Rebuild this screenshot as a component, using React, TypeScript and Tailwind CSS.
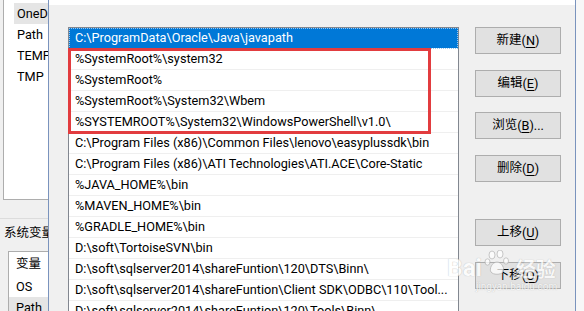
import React from "react";

const paths = [
  "C:\\ProgramData\\Oracle\\Java\\javapath",
  "%SystemRoot%\\system32",
  "%SystemRoot%",
  "%SystemRoot%\\System32\\Wbem",
  "%SYSTEMROOT%\\System32\\WindowsPowerShell\\v1.0\\",
  "C:\\Program Files (x86)\\Common Files\\lenovo\\easyplussdk\\bin",
  "C:\\Program Files (x86)\\ATI Technologies\\ATI.ACE\\Core-Static",
  "%JAVA_HOME%\\bin",
  "%MAVEN_HOME%\\bin",
  "%GRADLE_HOME%\\bin",
  "D:\\soft\\TortoiseSVN\\bin",
  "D:\\soft\\sqlserver2014\\shareFuntion\\120\\DTS\\Binn\\",
  "D:\\soft\\sqlserver2014\\shareFuntion\\Client SDK\\ODBC\\110\\Tool...",
  "D:\\soft\\sqlserver2014\\shareFuntion\\120\\Tools\\Binn\\",
];

const buttons = [
  { label: "新建", key: "N", after: "", mt: "mt-0" },
  { label: "编辑", key: "E", after: "", mt: "mt-[16px]" },
  { label: "浏览", key: "B", after: "...", mt: "mt-[15px]" },
  { label: "删除", key: "D", after: "", mt: "mt-[16px]" },
  { label: "上移", key: "U", after: "", mt: "mt-[37px]" },
  { label: "下移", key: "O", after: "", mt: "mt-[16px]" },
];

function WinButton({ label, k, after, mt }: { label: string; k: string; after: string; mt: string }) {
  return (
    <div
      className={`${mt} flex h-[27px] w-[86px] shrink-0 items-center justify-center border border-[#adadad] bg-[#e1e1e1] text-black`}
    >
      <span className="text-[12.5px]">{label}</span>(<span className="underline underline-offset-2">{k}</span>){after}
    </div>
  );
}

function BackWindow() {
  return (
    <div className="flex w-[48px] shrink-0 flex-col overflow-hidden">
      <div className="ml-[3px] flex h-[200px] shrink-0 flex-col border-l border-b border-[#adadad] bg-white pt-[3px]">
        <div className="ml-[10px] flex h-[21px] shrink-0 items-center bg-[#e5e5e5] pl-[3px]">
          <span className="whitespace-nowrap">OneD</span>
        </div>
        {["Path", "TEMP", "TMP"].map((v) => (
          <div key={v} className="flex h-[21px] shrink-0 items-center whitespace-nowrap pl-[13px]">
            {v}
          </div>
        ))}
      </div>
      <div className="mt-[18px] h-px shrink-0 bg-[#dcdcdc]" />
      <div className="mt-[2px] flex h-[24px] shrink-0 items-center whitespace-nowrap pl-[4px] text-[12.5px]">
        系统变量
      </div>
      <div className="ml-[8px] mt-[6px] flex min-h-0 flex-1 flex-col border-l border-t border-[#adadad] bg-white">
        <div className="flex h-[24px] shrink-0 items-center whitespace-nowrap pl-[7px] text-[12.5px]">变量</div>
        <div className="flex h-[21px] shrink-0 items-center whitespace-nowrap pl-[7px]">OS</div>
        <div className="flex h-[21px] shrink-0 items-center whitespace-nowrap bg-[#e5e5e5] pl-[7px]">Path</div>
      </div>
    </div>
  );
}

// baidu jingyan watermark over the lower buttons
function Watermark() {
  return (
    <div className="pointer-events-none absolute left-[446px] top-[250px] flex flex-col items-center opacity-75">
      <div className="flex items-end gap-[2px]">
        <span className="text-[24px] font-bold leading-none text-white [text-shadow:0_0_1px_#9a9a9a]">Bai</span>
        <svg width="30" height="26" viewBox="0 0 30 26" className="mb-[4px]">
          <g fill="#ffffff" stroke="#a8a8a8" strokeWidth="0.8">
            <ellipse cx="8" cy="5" rx="3" ry="4" />
            <ellipse cx="16" cy="4" rx="3" ry="4" />
            <ellipse cx="3.5" cy="12" rx="2.5" ry="3.2" />
            <ellipse cx="22" cy="11" rx="2.5" ry="3.2" />
            <path d="M13 12 C8 12 5 19 7 22 C9 25 17 25 19 22 C21 19 18 12 13 12 Z" />
          </g>
        </svg>
        <span className="text-[20px] font-bold leading-none text-white [text-shadow:0_0_1px_#9a9a9a]">经验</span>
      </div>
      <span className="ml-[30px] mt-[2px] text-[10px] leading-none text-white [text-shadow:0_0_1px_#9a9a9a]">
        jingyan.baidu.com
      </span>
    </div>
  );
}

export default function App() {
  return (
    <div className="relative h-[311px] w-[584px] overflow-hidden bg-[#f0f0f0] font-['Roboto','Noto_Sans_CJK_SC',sans-serif] text-[12.7px] text-black">
      <div className="flex h-full">
        <BackWindow />
        <div className="flex w-[528px] shrink-0 flex-col border-x border-[#7a93bd] bg-[#f0f0f0]">
          <div className="h-[5px] shrink-0 bg-white" />
          <div className="flex min-h-0 flex-1 pl-[19px] pt-[22px]">
            <div className="flex h-[284px] w-[391px] shrink-0 flex-col overflow-hidden border-x border-t border-[#828790] bg-white">
              {paths.map((p, i) => (
                <div
                  key={i}
                  className={`flex h-[21px] shrink-0 items-center whitespace-nowrap border-b pl-[6px] ${
                    i === 0
                      ? "border-white bg-[#0078d7] text-white outline-1 -outline-offset-1 outline-dotted outline-[#9cc7ee]"
                      : "border-[#efefef]"
                  }`}
                >
                  {p}
                </div>
              ))}
            </div>
            <div className="ml-[16px] flex flex-col">
              {buttons.map((b) => (
                <WinButton key={b.key} label={b.label} k={b.key} after={b.after} mt={b.mt} />
              ))}
            </div>
          </div>
        </div>
        <div className="flex-1 bg-[#f7f7f7]" />
      </div>
      <div className="pointer-events-none absolute left-[68px] top-[48px] h-[86px] w-[363px] border-[3px] border-[#e23c3f]" />
      <Watermark />
    </div>
  );
}
